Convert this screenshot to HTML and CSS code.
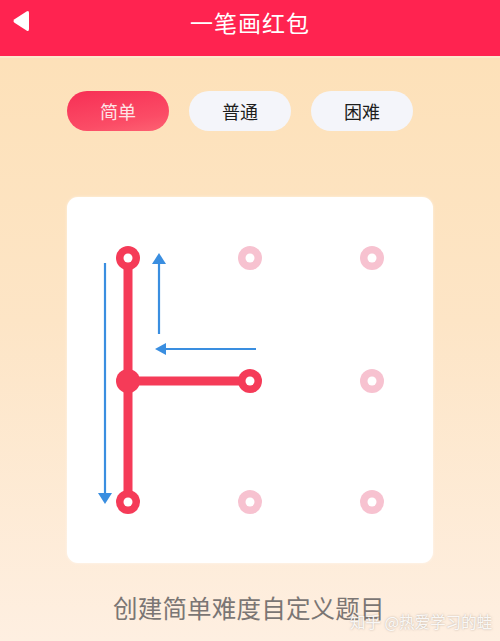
FILE: index.html
```html
<!DOCTYPE html>
<html lang="zh">
<head>
<meta charset="utf-8">
<link rel="stylesheet" href="styles.css">
</head>
<body>
<div class="page">
  <header class="topbar">
    <svg class="back" width="20" height="26" viewBox="0 0 20 26"><path d="M15.5 3.5 Q18 2 18 5 V21 Q18 24 15.5 22.5 L3.5 14.8 Q1.5 13 3.5 11.2 Z" fill="#fff"/></svg>
    <h1 class="title">一笔画红包</h1>
  </header>
  <div class="tabs">
    <div class="tab active">简单</div>
    <div class="tab">普通</div>
    <div class="tab">困难</div>
  </div>
  <div class="card">
    <svg width="366" height="366" viewBox="0 0 366 366">
      <g fill="#f7c2d0">
        <circle cx="183" cy="61" r="12"/><circle cx="305" cy="61" r="12"/>
        <circle cx="305" cy="184" r="12"/>
        <circle cx="183" cy="305" r="12"/><circle cx="305" cy="305" r="12"/>
      </g>
      <g fill="#fff">
        <circle cx="183" cy="61" r="4.5"/><circle cx="305" cy="61" r="4.5"/>
        <circle cx="305" cy="184" r="4.5"/>
        <circle cx="183" cy="305" r="4.5"/><circle cx="305" cy="305" r="4.5"/>
      </g>
      <path d="M61 61 V305 M61 184 H183" stroke="#f53b58" stroke-width="9" fill="none"/>
      <g fill="#f53b58">
        <circle cx="61" cy="61" r="12"/><circle cx="61" cy="305" r="12"/>
        <circle cx="183" cy="184" r="12"/><circle cx="61" cy="184" r="12"/>
      </g>
      <g fill="#fff">
        <circle cx="61" cy="61" r="4.5"/><circle cx="61" cy="305" r="4.5"/>
        <circle cx="183" cy="184" r="4.5"/>
      </g>
      <g stroke="#3a8ee0" stroke-width="2.2" fill="none">
        <path d="M38 66 V298"/>
        <path d="M92 137 V64"/>
        <path d="M189 152 H97"/>
      </g>
      <g fill="#3a8ee0">
        <path d="M31 296 H45 L38 307 Z"/>
        <path d="M85 67 H99 L92 56 Z"/>
        <path d="M99 146 V158 L88 152 Z"/>
      </g>
    </svg>
  </div>
  <div class="caption">创建简单难度自定义题目</div>
  <div class="watermark">知乎 @热爱学习的蛙</div>
</div>
</body>
</html>
```
FILE: styles.css
```css
* { box-sizing: border-box; }
html, body { margin: 0; padding: 0; }
body {
  width: 500px;
  height: 641px;
  overflow: hidden;
  font-family: "Noto Sans CJK SC", "Noto Sans", sans-serif;
}
.page {
  position: relative;
  width: 500px;
  height: 641px;
  background: linear-gradient(180deg, #fde0b6 0%, #fde5c6 50%, #feefe1 100%);
  display: flex;
  flex-direction: column;
}
.topbar {
  height: 56px;
  background: #ff2350;
  display: flex;
  align-items: center;
  justify-content: center;
  position: relative;
  border-bottom: 2px solid #fde8cc;
  box-sizing: content-box;
}
.back {
  position: absolute;
  left: 11px;
  top: 8px;
}
.title {
  margin: 0;
  color: #fff;
  font-weight: 400;
  font-size: 23px;
  letter-spacing: 1px;
  line-height: 1;
  margin-top: -12px;
}
.tabs {
  display: flex;
  gap: 20px;
  padding-left: 67px;
  margin-top: 33px;
}
.tab {
  width: 102px;
  height: 40px;
  border-radius: 20px;
  background: #f4f5fa;
  color: #1d1d1d;
  font-size: 18px;
  display: flex;
  align-items: center;
  justify-content: center;
}
.tab.active {
  background: linear-gradient(170deg, #f72f55 0%, #fb4c66 70%, #fd6373 100%);
  color: #fde4e6;
}
.card {
  margin: 66px 0 0 67px;
  width: 366px;
  height: 366px;
  background: #fff;
  border-radius: 11px;
  box-shadow: 0 0 3px rgba(255,255,255,0.6);
}
.card svg { display: block; }
.caption {
  margin-top: 29px;
  padding-left: 113px;
  font-size: 24.5px;
  line-height: 32px;
  color: #7b7674;
  letter-spacing: 0.2px;
}
.watermark {
  position: absolute;
  left: 350px;
  top: 610px;
  font-size: 15.5px;
  color: rgba(255,255,255,0.9);
  text-shadow: 0 0 2px rgba(120,110,100,0.55);
  letter-spacing: 0;
}
```
